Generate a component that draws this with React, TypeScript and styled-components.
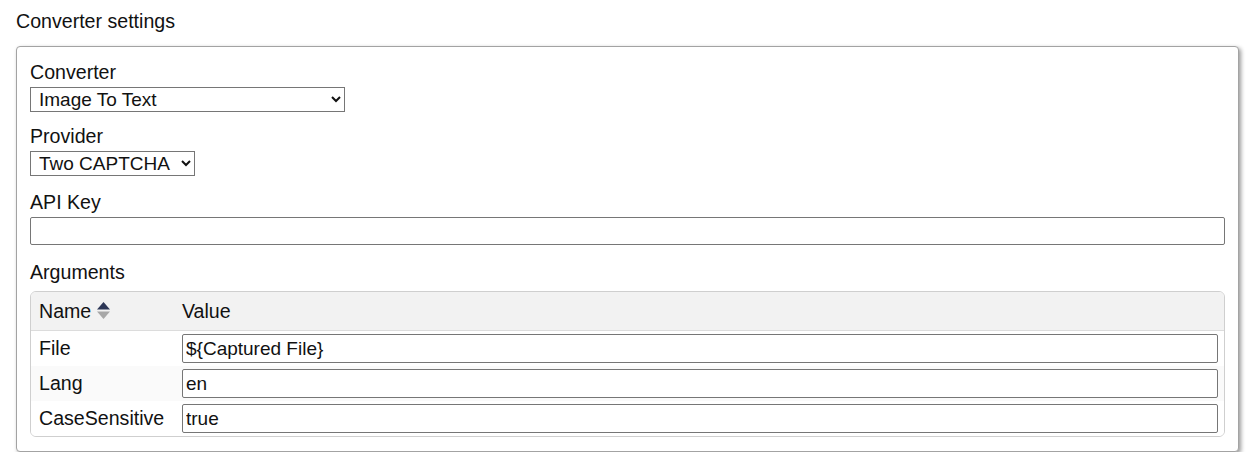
import React from "react";
import styled, { createGlobalStyle } from "styled-components";

const GlobalStyle = createGlobalStyle`
    body {
        margin: 0;
        padding: 0 9px 0 16px;
        background: #ffffff;
        font-family: "Liberation Sans", Arial, sans-serif;
        font-size: 19.6px;
        color: #111;
    }
`;

const Title = styled.div`
    margin: 10px 0 14px;
    line-height: 22px;
`;

const Card = styled.div`
    border: 1px solid #a3a3a3;
    border-radius: 4px;
    box-shadow: 2px 2px 4px rgba(0, 0, 0, 0.4);
    padding: 14px 13px 14px 13px;
    background: #fff;
`;

const Field = styled.div<{ gap: number }>`
    margin-bottom: ${p => p.gap}px;
`;

const Label = styled.div<{ after?: number }>`
    line-height: 22px;
    margin-bottom: ${p => p.after ?? 4}px;
`;

const Select = styled.select<{ width: number }>`
    font-family: inherit;
    font-size: 19px;
    height: 25px;
    padding: 0 4px 0 4px;
    border: 1px solid #767676;
    border-radius: 0;
    background: #fff;
    color: #111;
    width: ${p => p.width}px;
`;

const TextInput = styled.input`
    display: block;
    box-sizing: border-box;
    width: 100%;
    font-family: inherit;
    font-size: 19px;
    color: #111;
    border: 1px solid #767676;
    border-radius: 2px;
    padding: 0 4px 0 3px;
    background: #fff;
`;

const KeyInput = styled(TextInput)`
    height: 28px;
`;

const Table = styled.div`
    border: 1px solid #cfcfcf;
    border-radius: 6px;
    overflow: hidden;
`;

const Row = styled.div<{ head?: boolean; shade?: boolean }>`
    display: grid;
    grid-template-columns: 145px 1fr;
    align-items: center;
    height: ${p => (p.head ? 38 : 35)}px;
    background: ${p => (p.head ? "#f2f2f2" : p.shade ? "#fafafa" : "#fff")};
    border-bottom: ${p => (p.head ? "1px solid #dcdcdc" : "none")};
`;

const NameCell = styled.div`
    padding-left: 8px;
    display: flex;
    align-items: center;
    gap: 6px;
    white-space: nowrap;
`;

const ValueCell = styled.div`
    padding: 0 6px 0 6px;
`;

const ArgInput = styled(TextInput)`
    height: 29px;
`;

const SortIcon = () => (
    <svg width="13" height="18" viewBox="0 0 13 18">
        <path d="M6.5 0 L13 7.5 L0 7.5 Z" fill="#2c3656" />
        <path d="M0 9.5 L13 9.5 L6.5 17 Z" fill="#a8a8a8" />
    </svg>
);

const args = [
    { name: "File", value: "${Captured File}" },
    { name: "Lang", value: "en" },
    { name: "CaseSensitive", value: "true" },
];

export default function App() {
    return (
        <>
            <GlobalStyle />
            <Title>Converter settings</Title>
            <Card>
                <Field gap={13}>
                    <Label>Converter</Label>
                    <Select width={315} defaultValue="img">
                        <option value="img">Image To Text</option>
                    </Select>
                </Field>
                <Field gap={15}>
                    <Label>Provider</Label>
                    <Select width={165} defaultValue="two">
                        <option value="two">Two CAPTCHA</option>
                    </Select>
                </Field>
                <Field gap={16}>
                    <Label>API Key</Label>
                    <KeyInput defaultValue="" />
                </Field>
                <Field gap={0}>
                    <Label after={8}>Arguments</Label>
                    <Table>
                        <Row head>
                            <NameCell>
                                Name <SortIcon />
                            </NameCell>
                            <ValueCell>Value</ValueCell>
                        </Row>
                        {args.map((a, i) => (
                            <Row key={a.name} shade={i === 1}>
                                <NameCell>{a.name}</NameCell>
                                <ValueCell>
                                    <ArgInput defaultValue={a.value} />
                                </ValueCell>
                            </Row>
                        ))}
                    </Table>
                </Field>
            </Card>
        </>
    );
}
